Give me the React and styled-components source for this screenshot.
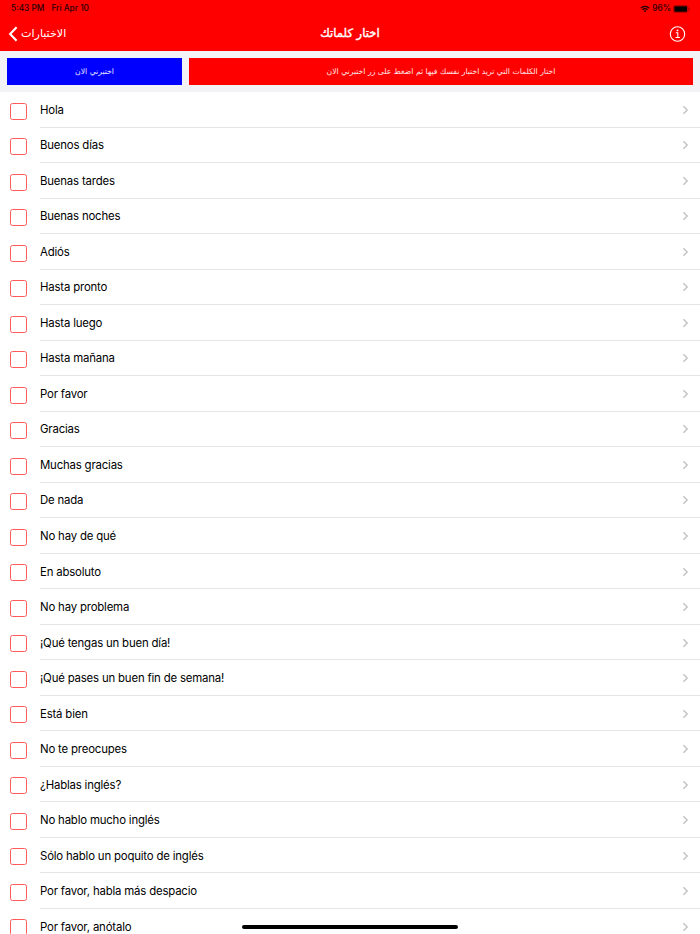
import React from "react";
import styled, { createGlobalStyle } from "styled-components";

const words = [
  "Hola",
  "Buenos días",
  "Buenas tardes",
  "Buenas noches",
  "Adiós",
  "Hasta pronto",
  "Hasta luego",
  "Hasta mañana",
  "Por favor",
  "Gracias",
  "Muchas gracias",
  "De nada",
  "No hay de qué",
  "En absoluto",
  "No hay problema",
  "¡Qué tengas un buen día!",
  "¡Qué pases un buen fin de semana!",
  "Está bien",
  "No te preocupes",
  "¿Hablas inglés?",
  "No hablo mucho inglés",
  "Sólo hablo un poquito de inglés",
  "Por favor, habla más despacio",
  "Por favor, anótalo",
];

const GlobalStyle = createGlobalStyle`
  * { box-sizing: border-box; }
  body { margin: 0; background: #fff; overflow: hidden; }
`;

const Screen = styled.div`
  position: relative;
  display: flex;
  flex-direction: column;
  width: 700px;
  height: 934px;
  overflow: hidden;
  background: #fff;
  color: #000;
  font-family: Inter, "DejaVu Sans", sans-serif;
`;

const Header = styled.header`
  flex: none;
  height: 51px;
  background: #ff0000;
`;

const StatusBar = styled.div`
  display: flex;
  justify-content: space-between;
  height: 17px;
  padding: 0 10px 0 11px;
  font-size: 8.3px;
  font-weight: 500;
  line-height: 17px;
  color: #280000;
`;

const StatusGroup = styled.div`
  display: flex;
  align-items: center;
  gap: ${(p) => p.$gap}px;
`;

const NavBar = styled.nav`
  display: grid;
  grid-template-columns: 1fr auto 1fr;
  align-items: center;
  height: 34px;
  padding: 0 8px;
  color: #fff;
`;

const BackButton = styled.div`
  display: flex;
  align-items: center;
  gap: 3px;
`;

const ArabicText = styled.span`
  display: block;
  direction: rtl;
  white-space: nowrap;
  font-family: "DejaVu Sans", sans-serif;
  font-size: ${(p) => p.$size}px;
  -webkit-text-stroke: ${(p) => (p.$bold ? "0.4px currentColor" : "0")};
  line-height: 1.2;
`;

const InfoSlot = styled.div`
  display: flex;
  justify-content: flex-end;
  padding-right: 6px;
`;

const Toolbar = styled.div`
  flex: none;
  display: grid;
  grid-template-columns: 175px 504px;
  gap: 7px;
  height: 41px;
  padding: 7px;
  background: #f2f2f7;
`;

const ActionBox = styled.div`
  display: flex;
  align-items: center;
  justify-content: center;
  height: 27px;
  color: ${(p) => p.$ink};
  background: ${(p) => p.$fill};
`;

const List = styled.ul`
  flex: none;
  margin: 0;
  padding: 0;
  list-style: none;
`;

const Row = styled.li`
  display: flex;
  height: 35.53px;
  padding-left: 10px;
`;

const Checkbox = styled.span`
  flex: none;
  width: 17px;
  height: 17px;
  margin: 10.5px 13px 0 0;
  border: 1px solid #ff5a5a;
  border-radius: 2.5px;
`;

const RowBody = styled.div`
  flex: 1;
  display: flex;
  justify-content: space-between;
  align-items: center;
  padding: 1.1px 11px 0 0;
  border-bottom: 1px solid #e6e6e7;
  font-size: 11.4px;
  letter-spacing: -0.18px;
`;

const HomeIndicator = styled.div`
  position: absolute;
  left: 242px;
  bottom: 5px;
  width: 216px;
  height: 4px;
  border-radius: 2px;
  background: #000;
`;

const BackIcon = () => (
  <svg width="10" height="16" viewBox="0 0 10 16" fill="none">
    <path d="M8.6 1.3 2.1 8l6.5 6.7" stroke="#fff" strokeWidth="2.1" />
  </svg>
);

const InfoIcon = () => (
  <svg width="17" height="17" viewBox="0 0 17 17" fill="none" stroke="#fff">
    <circle cx="8.5" cy="8" r="7.2" strokeWidth="1.1" />
    <path d="M6.8 6.8h2v4.4M6.5 11.5h4.4" strokeWidth="1.1" />
    <circle cx="8.5" cy="4.4" r=".95" fill="#fff" stroke="none" />
  </svg>
);

const WifiIcon = () => (
  <svg width="10" height="8" viewBox="0 0 10 8" fill="none" stroke="#180000">
    <path d="M.8 3.1a6.1 6.1 0 0 1 8.4 0M2.5 4.8a3.7 3.7 0 0 1 5 0" strokeWidth="1.3" />
    <path d="M3.6 5.8a2.1 2.1 0 0 1 2.8 0L5 7.3z" fill="#180000" stroke="none" />
  </svg>
);

const BatteryIcon = () => (
  <svg width="17" height="8" viewBox="0 0 17 8">
    <rect x=".4" y=".4" width="14.8" height="7.2" rx="2" fill="none" stroke="#a00000" strokeWidth=".8" />
    <rect x="1.3" y="1.3" width="12.8" height="5.4" rx="1" fill="#000" />
    <path d="M16 2.8c1.2.4 1.2 2 0 2.4z" fill="#a00000" />
  </svg>
);

const Chevron = () => (
  <svg width="7" height="10" viewBox="0 0 7 10" fill="none">
    <path d="M1.4 1.2 5.2 5 1.4 8.8" stroke="#c2c2c5" strokeWidth="1.4" />
  </svg>
);

export default function App() {
  return (
    <Screen>
      <GlobalStyle />
      <Header>
        <StatusBar>
          <StatusGroup $gap={7}>
            <span>5:43 PM</span>
            <span>Fri Apr 10</span>
          </StatusGroup>
          <StatusGroup $gap={2}>
            <WifiIcon />
            <span>96%</span>
            <BatteryIcon />
          </StatusGroup>
        </StatusBar>
        <NavBar>
          <BackButton>
            <BackIcon />
            <ArabicText $size={11.1}>الاختبارات</ArabicText>
          </BackButton>
          <ArabicText $size={11.6} $bold>اختار كلماتك</ArabicText>
          <InfoSlot>
            <InfoIcon />
          </InfoSlot>
        </NavBar>
      </Header>
      <Toolbar>
        <ActionBox $fill="#0000ff" $ink="#e4e4ff">
          <ArabicText $size={7.7}>اختبرني الان</ArabicText>
        </ActionBox>
        <ActionBox $fill="#ff0000" $ink="#ffe4e4">
          <ArabicText $size={7.7}>
            اختار الكلمات التي تريد اختبار نفسك فيها ثم اضغط على زر اختبرني الان
          </ArabicText>
        </ActionBox>
      </Toolbar>
      <List>
        {words.map((word) => (
          <Row key={word}>
            <Checkbox />
            <RowBody>
              <span>{word}</span>
              <Chevron />
            </RowBody>
          </Row>
        ))}
      </List>
      <HomeIndicator />
    </Screen>
  );
}
